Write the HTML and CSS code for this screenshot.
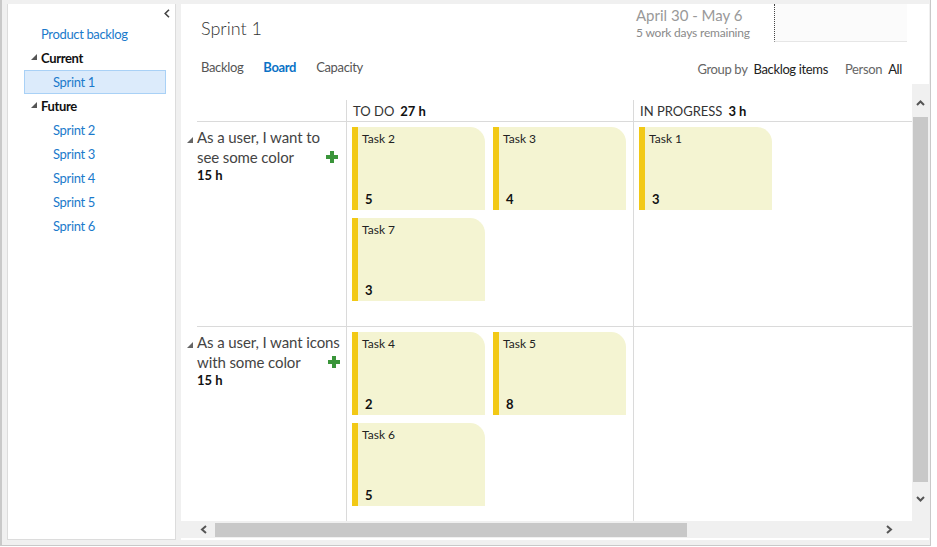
FILE: index.html
```html
<!DOCTYPE html>
<html lang="en">
<head>
<meta charset="utf-8">
<title>Sprint 1 - Board</title>
<link rel="stylesheet" href="styles.css">
</head>
<body>
<div class="frame">
  <aside class="nav">
    <div class="nav-top">
      <svg class="nav-collapse" width="6" height="9" viewBox="0 0 6 9"><polyline points="5,0.8 1.2,4.5 5,8.2" fill="none" stroke="#444" stroke-width="1.6"/></svg>
    </div>
    <a class="nav-link nav-root" href="#">Product backlog</a>
    <div class="nav-group"><svg class="tri" width="6" height="6" viewBox="0 0 6 6"><polygon points="6,0 6,6 0,6" fill="#555"/></svg>Current</div>
    <div class="nav-item selected"><a class="nav-link" href="#">Sprint 1</a></div>
    <div class="nav-group"><svg class="tri" width="6" height="6" viewBox="0 0 6 6"><polygon points="6,0 6,6 0,6" fill="#555"/></svg>Future</div>
    <div class="nav-item"><a class="nav-link" href="#">Sprint 2</a></div>
    <div class="nav-item"><a class="nav-link" href="#">Sprint 3</a></div>
    <div class="nav-item"><a class="nav-link" href="#">Sprint 4</a></div>
    <div class="nav-item"><a class="nav-link" href="#">Sprint 5</a></div>
    <div class="nav-item"><a class="nav-link" href="#">Sprint 6</a></div>
  </aside>

  <main class="main">
    <header class="head">
      <h1 class="title">Sprint 1</h1>
      <div class="dates">
        <div class="date-range">April 30 - May 6</div>
        <div class="date-left">5 work days remaining</div>
      </div>
      <div class="burndown"></div>
    </header>

    <div class="toolbar">
      <nav class="tabs">
        <a class="tab" href="#">Backlog</a>
        <a class="tab active" href="#">Board</a>
        <a class="tab" href="#">Capacity</a>
      </nav>
      <div class="filters">
        <span class="filter"><span class="filter-label">Group by</span><span class="filter-value">Backlog items</span></span>
        <span class="filter"><span class="filter-label">Person</span><span class="filter-value">All</span></span>
      </div>
    </div>

    <div class="board-view">
      <div class="board">
        <div class="colhead colhead-label"></div>
        <div class="colhead"><span class="col-name">TO DO</span><span class="col-hours">27 h</span></div>
        <div class="colhead"><span class="col-name">IN PROGRESS</span><span class="col-hours">3 h</span></div>

        <div class="story">
          <div class="story-inner">
            <svg class="tri story-tri" width="6" height="6" viewBox="0 0 6 6"><polygon points="6,0 6,6 0,6" fill="#666"/></svg>
            <div class="story-text">
              <div class="story-line">As a user, I want to</div>
              <div class="story-line story-line-add">see some color
                <svg class="plus" width="12" height="12" viewBox="0 0 12 12"><rect x="4" y="0" width="4" height="12" fill="#3a953a"/><rect x="0" y="4" width="12" height="4" fill="#3a953a"/></svg>
              </div>
              <div class="story-hours">15 h</div>
            </div>
          </div>
        </div>
        <div class="cell">
          <div class="card"><span class="card-title">Task 2</span><span class="card-num">5</span></div>
          <div class="card"><span class="card-title">Task 3</span><span class="card-num">4</span></div>
          <div class="card"><span class="card-title">Task 7</span><span class="card-num">3</span></div>
        </div>
        <div class="cell">
          <div class="card"><span class="card-title">Task 1</span><span class="card-num">3</span></div>
        </div>

        <div class="story">
          <div class="story-inner">
            <svg class="tri story-tri" width="6" height="6" viewBox="0 0 6 6"><polygon points="6,0 6,6 0,6" fill="#666"/></svg>
            <div class="story-text">
              <div class="story-line">As a user, I want icons</div>
              <div class="story-line story-line-add">with some color
                <svg class="plus" width="12" height="12" viewBox="0 0 12 12"><rect x="4" y="0" width="4" height="12" fill="#3a953a"/><rect x="0" y="4" width="12" height="4" fill="#3a953a"/></svg>
              </div>
              <div class="story-hours">15 h</div>
            </div>
          </div>
        </div>
        <div class="cell">
          <div class="card"><span class="card-title">Task 4</span><span class="card-num">2</span></div>
          <div class="card"><span class="card-title">Task 5</span><span class="card-num">8</span></div>
          <div class="card"><span class="card-title">Task 6</span><span class="card-num">5</span></div>
        </div>
        <div class="cell"></div>
      </div>

      <div class="vscroll">
        <div class="vbtn vbtn-up"><svg width="9" height="6" viewBox="0 0 9 6"><polyline points="1,5 4.5,1.5 8,5" fill="none" stroke="#555" stroke-width="2"/></svg></div>
        <div class="vthumb"></div>
        <div class="vbtn vbtn-down"><svg width="9" height="6" viewBox="0 0 9 6"><polyline points="1,1 4.5,4.5 8,1" fill="none" stroke="#555" stroke-width="2"/></svg></div>
      </div>
    </div>

    <div class="hscroll">
      <div class="hbar">
        <div class="hbtn hbtn-left"><svg width="7" height="9" viewBox="0 0 7 9"><polyline points="6,1 2,4.5 6,8" fill="none" stroke="#555" stroke-width="2"/></svg></div>
        <div class="htrack"><div class="hthumb"></div></div>
        <div class="hbtn hbtn-right"><svg width="7" height="9" viewBox="0 0 7 9"><polyline points="1,1 5,4.5 1,8" fill="none" stroke="#555" stroke-width="2"/></svg></div>
      </div>
      <div class="corner"></div>
    </div>
  </main>
</div>
</body>
</html>
```

FILE: styles.css
```css
* { box-sizing: border-box; }

html, body {
  margin: 0;
  padding: 0;
  background: #ffffff;
}

body {
  font-family: "Lato", "Open Sans", "Liberation Sans", sans-serif;
  font-size: 13px;
  color: #333;
}

a { text-decoration: none; }

.frame {
  display: flex;
  gap: 5px;
  width: 931px;
  height: 546px;
  padding: 4px 1px 5px 5px;
  background: #f0f0f0;
  border-left: 2px solid #c9c9c9;
  border-right: 1px solid #c9c9c9;
  border-bottom: 1px solid #c9c9c9;
}

/* ---------- left navigation ---------- */
.nav {
  width: 169px;
  flex: none;
  background: #fff;
  border: 1px solid #dcdcdc;
  border-top: none;
  display: flex;
  flex-direction: column;
  letter-spacing: -0.35px;
}

.nav-top {
  height: 18px;
  display: flex;
  align-items: center;
  justify-content: flex-end;
  padding-right: 5px;
}

.nav-collapse { display: block; }

.nav-link {
  color: #1b7acb;
  font-size: 13px;
}

.nav-root {
  height: 24px;
  line-height: 24px;
  padding-left: 33px;
}

.nav-group {
  height: 24px;
  display: flex;
  align-items: center;
  padding-left: 23px;
  font-weight: 700;
  color: #111;
  font-size: 13px;
}

.nav-group .tri {
  margin-right: 4px;
  margin-top: -3px;
}

.nav-item {
  height: 24px;
  line-height: 22px;
  padding-left: 28px;
  margin: 0 9px 0 16px;
  border: 1px solid transparent;
}

.nav-item.selected {
  background: #dcebfb;
  border-color: #a9d1f6;
}

/* ---------- main ---------- */
.main {
  width: 748px;
  flex: none;
  background: #fff;
  display: flex;
  flex-direction: column;
}

.head {
  height: 38px;
  display: flex;
  align-items: flex-start;
}

.title {
  flex: 1;
  margin: 0;
  padding: 11px 0 0 20px;
  font-size: 18px;
  line-height: 26px;
  font-weight: 300;
  color: #333;
}

.dates {
  width: 138px;
  padding-top: 1px;
}

.date-range {
  font-size: 15px;
  line-height: 20px;
  color: #999;
}

.date-left {
  font-size: 12px;
  line-height: 16px;
  color: #8a8a8a;
  letter-spacing: -0.2px;
}

.burndown {
  width: 133px;
  height: 38px;
  margin-right: 22px;
  background: #fbfbfb;
  border-left: 1px dotted #444;
  border-bottom: 1px solid #e6e6e6;
}

.toolbar {
  height: 42px;
  display: flex;
  align-items: center;
  justify-content: space-between;
  padding: 0 27px 0 20px;
  letter-spacing: -0.35px;
}

.tabs {
  display: flex;
  gap: 20px;
  margin-top: 8px;
}

.tab {
  color: #555;
  font-size: 13px;
}

.tab.active {
  color: #0a72c6;
  font-weight: 700;
}

.filters {
  display: flex;
  gap: 17px;
  margin-top: 12px;
}

.filter {
  display: flex;
  gap: 6px;
}

.filter-label { color: #666; }
.filter-value { color: #222; }

/* ---------- board ---------- */
.board-view {
  height: 437px;
  display: flex;
  overflow: hidden;
}

.board {
  width: 731px;
  flex: none;
  display: grid;
  grid-template-columns: 149px 287px 1fr;
  grid-template-rows: 22px 205px 205px;
  padding: 16px 0 0 16px;
  align-content: start;
}

.colhead {
  border-bottom: 1px solid #dadada;
  border-left: 1px solid #dadada;
  display: flex;
  align-items: center;
  gap: 6px;
  padding-left: 6px;
  font-size: 13px;
}

.colhead-label { border-left: none; }

.col-name { color: #333; }
.col-hours { font-weight: 700; color: #111; }

.story {
  border-bottom: 1px solid #dadada;
  padding-top: 5px;
}

.story-inner {
  display: flex;
  margin-left: -10px;
}

.story-tri {
  flex: none;
  margin: 10px 4px 0 0;
}

.story-text {
  flex: 1;
  padding-right: 8px;
}

.story-line {
  font-size: 15px;
  line-height: 20px;
  color: #444;
  white-space: nowrap;
  letter-spacing: -0.1px;
}

.story-line-add {
  display: flex;
  align-items: center;
  justify-content: space-between;
}

.plus { display: block; }

.story-hours {
  font-size: 13px;
  line-height: 16px;
  font-weight: 700;
  color: #111;
}

.cell {
  border-left: 1px solid #dadada;
  border-bottom: 1px solid #dadada;
  padding: 5px;
  display: flex;
  flex-wrap: wrap;
  align-content: flex-start;
  gap: 8px;
}

.card {
  width: 133px;
  height: 83px;
  background: #f4f4d2;
  border-left: 6px solid #f2c916;
  border-top-right-radius: 15px;
  display: flex;
  flex-direction: column;
  justify-content: space-between;
  padding: 4px 0 3px 4px;
}

.card-title {
  font-size: 12px;
  line-height: 16px;
  color: #222;
}

.card-num {
  font-size: 13px;
  line-height: 16px;
  font-weight: 700;
  color: #111;
  padding-left: 3px;
}

/* ---------- scrollbars ---------- */
.vscroll {
  width: 17px;
  flex: none;
  background: #f0f0f0;
  display: flex;
  flex-direction: column;
}

.vbtn {
  display: flex;
  justify-content: center;
}

.vbtn svg { display: block; }

.vbtn-up {
  height: 33px;
  padding-top: 16px;
}

.vthumb {
  height: 365px;
  margin: 0 1px;
  background: #c8c8c8;
}

.vbtn-down {
  flex: 1;
  padding-top: 14px;
}

.hscroll {
  height: 17px;
  display: flex;
  background: #f0f0f0;
}

.hbar {
  width: 731px;
  display: flex;
}

.hbtn {
  width: 34px;
  display: flex;
  align-items: center;
}

.hbtn svg { display: block; }

.hbtn-left {
  justify-content: flex-end;
  padding-right: 8px;
}

.hbtn-right {
  justify-content: flex-start;
  padding-left: 8px;
}

.htrack {
  flex: 1;
  padding: 2px 0 0 0;
}

.hthumb {
  width: 472px;
  height: 14px;
  background: #c8c8c8;
}

.corner {
  flex: 1;
}
```
